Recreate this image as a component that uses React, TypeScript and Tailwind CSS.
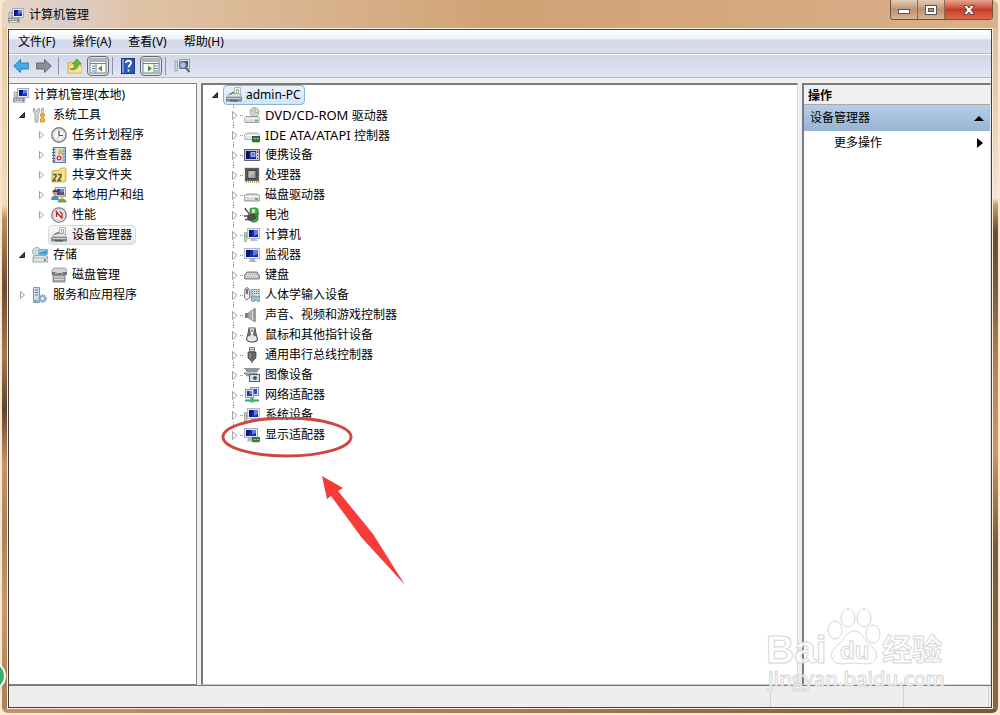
import React, { useState } from 'react';

type IconProps = { children: React.ReactNode };

const Icon = ({ children }: IconProps) => (
  <svg viewBox="0 0 16 16" className="w-4 h-4 shrink-0" aria-hidden="true">
    {children}
  </svg>
);

const Screen = () => (
  <>
    <rect x="4.5" y="1.5" width="11" height="9" fill="#e8e8f0" stroke="#a9abb8" />
    <rect x="6" y="3" width="8" height="6" fill="#1b2fb0" />
    <path d="M6 3h4l-2 6h-2z" fill="#0c1670" />
    <path d="M10 3h4v3l-4 1z" fill="#5b7cec" />
    <path d="M8 11h4l1 2h-6z" fill="#b9bbc6" />
  </>
);

const ConsoleIcon = () => (
  <Icon>
    <Screen />
    <path d="M1 5h3v6h-3z" fill="#c9ccd2" stroke="#8b8f96" strokeWidth=".6" />
    <path d="M0 11h11l1 4.500h-12z" fill="#8d939a" />
    <path d="M1 12.500h2M4 12.500h2M7 12.500h2M2 14.500h7" stroke="#dfe3e6" />
  </Icon>
);

const ComputerIcon = () => (
  <Icon>
    <rect x="3.500" y="1.500" width="12" height="10" fill="#e8e8f0" stroke="#b5b7c3" />
    <rect x="5" y="3" width="9" height="7" fill="#182ba9" />
    <path d="M5 3h4l-2 7h-2z" fill="#0c1670" />
    <path d="M10 3h4v4l-4 2z" fill="#5b7cec" />
    <path d="M7 12h5l2 2h-8z" fill="#b9bbc6" />
    <path d="M.5 5.500h2v9h-2z" fill="#cfe0cf" stroke="#7d9a80" strokeWidth=".7" />
    <path d="M1 9h1.500" stroke="#3bad3e" />
  </Icon>
);

const MonitorIcon = () => (
  <Icon>
    <rect x=".5" y="1.500" width="15" height="10" fill="#e9eaf2" stroke="#b2b5c2" />
    <rect x="2" y="3" width="12" height="7" fill="#182ba9" />
    <path d="M2 3h5l-2 7h-3z" fill="#0b156c" />
    <path d="M9 3h5v4l-5 2z" fill="#587aec" />
    <path d="M6 12h5v1.500l2 1.500h-9l2-1.500z" fill="#adb0bd" />
  </Icon>
);

const DisplayIcon = () => (
  <Icon>
    <rect x=".5" y="1.500" width="13" height="9" fill="#e4e6f0" stroke="#a9adbc" />
    <rect x="2" y="3" width="10" height="6" fill="#182ba9" />
    <path d="M2 3h4l-2 6h-2z" fill="#0b156c" />
    <path d="M8 3h4v3l-4 2z" fill="#587aec" />
    <path d="M4 11h4v2h1v1.500h-6z" fill="#b5b8c4" />
    <rect x="8.500" y="10.500" width="7" height="4" fill="#2e7d50" stroke="#1d5937" strokeWidth=".7" />
    <path d="M10 12.500h1.500M13 12.500h1.500M9 15.500h6" stroke="#d8d7a0" />
  </Icon>
);

const ToolsIcon = () => (
  <Icon>
    <path d="M2 1l1.500 3h2l1-3c2 2 1.500 4-.5 5.500v8c-1 1.200-2 1.200-3 0v-8c-2-1.500-2.500-4-1-5.500z" fill="#d8dadd" stroke="#85898e" strokeWidth=".8" />
    <path d="M9.500 1h2v6h-2z" fill="#c9cbce" stroke="#8e9296" strokeWidth=".5" />
    <path d="M8.500 7h4v2l-1 1v1l1 1v3h-4v-3l1-1v-1l-1-1z" fill="#f2bd2c" stroke="#b07d10" strokeWidth=".7" />
  </Icon>
);

const ClockIcon = () => (
  <Icon>
    <circle cx="8" cy="8" r="7.200" fill="#eef0f3" stroke="#7d8187" strokeWidth="1.400" />
    <circle cx="8" cy="8" r="5.200" fill="#f9fafb" stroke="#c5c9ce" strokeWidth=".7" />
    <path d="M8 3.500v5h4" fill="none" stroke="#55504a" strokeWidth="1.200" />
    <path d="M8 8.500l-1.500 3" stroke="#d8a040" />
  </Icon>
);

const EventIcon = () => (
  <Icon>
    <rect x="2.500" y=".5" width="12" height="15" fill="#b9cde6" stroke="#5e7ba5" />
    <path d="M5 1h6v14h-6z" fill="#dfe3e8" />
    <path d="M9 2l3 5h-5z" fill="#f6c61f" stroke="#b58a10" strokeWidth=".5" />
    <circle cx="8" cy="11" r="2.500" fill="#cf3d3a" />
    <path d="M7 10l2 2M9 10l-2 2" stroke="#fff" strokeWidth=".8" />
    <path d="M11.500 4h2.500M11.500 7h2.500M11.500 10h2.500M11.500 13h2.500" stroke="#6a83ad" />
    <path d="M1 2.500h3M1 5.500h3M1 8.500h3M1 11.500h3M1 14h3" stroke="#4f5f7a" />
  </Icon>
);

const SharedIcon = () => (
  <Icon>
    <path d="M1 4l8-1 1-2h4l1 1v12l-2 1h-12z" fill="#f6dc7b" stroke="#c29d35" strokeWidth=".8" />
    <path d="M10 2.500h4" stroke="#fff6cd" />
    <path d="M2 7.500h3v2l-3 4h3M7 7.500h3v2l-3 4h3" fill="none" stroke="#4c6134" strokeWidth="1.400" />
    <path d="M12.500 5v9" stroke="#fbeeb4" />
  </Icon>
);

const UsersIcon = () => (
  <Icon>
    <rect x="4.500" y=".5" width="10" height="9" fill="#dfe3f1" stroke="#9398b3" />
    <rect x="6" y="2" width="7" height="6" fill="#263fc0" />
    <path d="M9 2h4v3l-4 1z" fill="#6987e6" />
    <circle cx="4" cy="5.500" r="2.500" fill="#cb9168" />
    <path d="M1.500 5c0-3.500 5-3.500 5 0z" fill="#5b3a23" />
    <path d="M0 13c0-6 8-6 8 0z" fill="#4a8fc0" />
    <circle cx="11" cy="8.500" r="2.500" fill="#dfb084" />
    <path d="M8.500 8c0-3.500 5-3.500 5 0z" fill="#7a5328" />
    <path d="M6.500 15.500c0-5.500 9-5.500 9 0z" fill="#69a653" />
  </Icon>
);

const PerfIcon = () => (
  <Icon>
    <circle cx="8" cy="8" r="7.200" fill="#f6f6f6" stroke="#787c80" strokeWidth="1.300" />
    <circle cx="8" cy="8" r="5.200" fill="#fff" stroke="#c4a09f" strokeWidth=".8" />
    <path d="M5.500 10v-5l5.500 6.500M8.500 4.500l2.500 2v4" fill="none" stroke="#b51f1f" strokeWidth="1.400" />
  </Icon>
);

const DeviceIcon = () => (
  <Icon>
    <path d="M8.500 .5h6v8h-6z" fill="#f4f6f3" stroke="#b4b9b6" />
    <path d="M10.500 7v-4.500h2v4.500" fill="none" stroke="#8fb987" />
    <path d="M2 8l2-1.500h9l2 1.500v2h-13z" fill="#dde1e3" stroke="#8f979b" strokeWidth=".7" />
    <path d="M4 7.500l4-2.500" stroke="#666f74" strokeWidth="1.400" />
    <path d="M0 10h16v4.500h-16z" fill="#808a8f" />
    <path d="M1 11.500h14" stroke="#c9cfd2" />
    <path d="M4 13h8v1.500h-8z" fill="#596267" />
  </Icon>
);

const StorageIcon = () => (
  <Icon>
    <circle cx="5" cy="5" r="4.500" fill="#d6dfda" stroke="#8d9c98" strokeWidth=".8" />
    <circle cx="5" cy="5" r="1.500" fill="#fff" stroke="#8d9c98" strokeWidth=".6" />
    <rect x="6" y="2" width="10" height="6" fill="#3a9fd8" stroke="#dcebf3" strokeWidth=".7" />
    <path d="M7 3h8l-8 3z" fill="#85cdf0" />
    <path d="M1 10l2-1.500h11l2 1.500v5h-15z" fill="#e3e5e6" stroke="#888e91" strokeWidth=".8" />
    <path d="M1 11h15" stroke="#9fa5a8" strokeWidth=".8" />
    <path d="M12 13h2" stroke="#3cb54a" strokeWidth="2" />
  </Icon>
);

const DiskMgmtIcon = () => (
  <Icon>
    <path d="M1 3l2-2h11l2 2v4h-15z" fill="#d1d3d4" stroke="#8d9193" strokeWidth=".8" />
    <path d="M1 5h15v3h-15z" fill="#6f7476" />
    <path d="M4 6.500l5-1.500 3 1.500" stroke="#f4f5f5" fill="none" />
    <path d="M2 8h12v7h-12z" fill="#a2a6a8" stroke="#7a7e80" strokeWidth=".8" />
    <path d="M3 10h10M3 12.500h10" stroke="#d6d9da" />
  </Icon>
);

const ServicesIcon = () => (
  <Icon>
    <path d="M1.500 .5h6v15h-6z" fill="#cfdce5" stroke="#7e95a5" />
    <path d="M3 3h3M3 5.500h3M3 8h3" stroke="#648198" />
    <path d="M1 13h5v2.500h-5z" fill="#8ea6b5" />
    <circle cx="10.500" cy="11.500" r="3.200" fill="#cfe0ef" stroke="#6f97ba" strokeWidth="2" strokeDasharray="1.500 .8" />
    <circle cx="10.500" cy="11.500" r="2" fill="#f4f9fd" stroke="#6f97ba" strokeWidth=".8" />
  </Icon>
);

const DiscDriveIcon = () => (
  <Icon>
    <circle cx="10.500" cy="5" r="4.500" fill="#d5dcd5" stroke="#8d9a92" strokeWidth=".8" />
    <path d="M7 3l3.500 2 1-4M10.500 5l4 1" stroke="#8cc47d" fill="none" />
    <circle cx="10.500" cy="5" r="1.300" fill="#fff" stroke="#7c8880" strokeWidth=".6" />
    <path d="M0 11.500l2-2h12l2 2v3l-1 1h-14l-1-1z" fill="#dadcdd" stroke="#858a8d" strokeWidth=".8" />
    <path d="M1 11.500h14" stroke="#f8f8f8" />
    <path d="M11 13.500h3" stroke="#47b44d" strokeWidth="1.400" />
  </Icon>
);

const IdeIcon = () => (
  <Icon>
    <path d="M0 8l3-2h10l3 2v4c-5 1-11 1-16 0z" fill="#e3e4e5" stroke="#9ba0a2" strokeWidth=".8" />
    <path d="M1 8.500h14" stroke="#fff" />
    <rect x="8.500" y="9.500" width="7" height="5" fill="#2f7b51" stroke="#174c2e" strokeWidth=".8" />
    <path d="M10 11.500h1.500M13 11.500h1.500M9 15.500h6" stroke="#d2d4a3" />
  </Icon>
);

const PortableIcon = () => (
  <Icon>
    <rect x=".5" y="2.500" width="15" height="11" fill="#c4c5cf" stroke="#5d6076" />
    <rect x="2" y="4" width="10" height="8" fill="#1326a0" />
    <path d="M2 4h3v8h-3z" fill="#070e4a" />
    <path d="M7 5.500h4v4h-4z" fill="#5679e6" stroke="#c8d4f5" strokeWidth=".8" />
    <path d="M13.500 4v2M13.500 8v1M13.500 11v1" stroke="#3f445c" />
  </Icon>
);

const CpuIcon = () => (
  <Icon>
    <rect x="1.500" y="1.500" width="13" height="13.500" fill="none" stroke="#b3a46f" strokeWidth="2" strokeDasharray="1 1" />
    <rect x="1" y="1" width="14" height="13" fill="#5c5d5e" />
    <rect x="4" y="3.500" width="8" height="8" fill="#a5a6a7" stroke="#3c3c3d" />
    <path d="M4.500 4h7l-7 7z" fill="#b9babb" />
  </Icon>
);

const DiskIcon = () => (
  <Icon>
    <path d="M0 9l3-2h10l3 2v4l-1 1h-14l-1-1z" fill="#d8d9da" stroke="#83878a" strokeWidth=".9" />
    <path d="M1 9.500h14" stroke="#fbfbfb" />
    <path d="M11 12h3" stroke="#3bb143" strokeWidth="1.500" />
  </Icon>
);

const BatteryIcon = () => (
  <Icon>
    <path d="M6 2l2-1h4l2 1v11l-2 2h-4l-2-2z" fill="#45b04a" stroke="#267030" strokeWidth=".8" />
    <path d="M8 2h3v5h-3z" fill="#b5ecae" />
    <path d="M1 1c1 3 3 3 4 6M0 9h5M1 12.500h5" fill="none" stroke="#4e4e44" strokeWidth="1.400" />
    <path d="M4 8l6-1.500c3 0 3 5 0 6l-4 1c-2 0-3-3-2-5.500z" fill="#4f5247" stroke="#2f322a" strokeWidth=".6" />
    <path d="M11 9l4-3" stroke="#4c7a45" strokeWidth="1.600" />
  </Icon>
);

const KeyboardIcon = () => (
  <Icon>
    <path d="M3 5h10l3 4v2l-1 1h-14l-1-1v-2z" fill="#b4b7bd" stroke="#73777d" strokeWidth=".9" />
    <path d="M3 7h10M2.500 8.500h11M2 10h12" stroke="#eceef1" strokeDasharray="1.200 .8" />
  </Icon>
);

const HidIcon = () => (
  <Icon>
    <path d="M1 2l2-1.500 2 1.500 1 8-2 2.500h-2l-1.500-2z" fill="#ececed" stroke="#66696d" strokeWidth=".9" />
    <path d="M3 2v5" stroke="#333" strokeWidth="1.300" />
    <path d="M7 2.500h9v8h-9z" fill="#d5dadf" stroke="#868b90" strokeWidth=".8" />
    <path d="M8 4.500h7M8 6.500h7" stroke="#67727c" strokeDasharray="1 1" />
    <path d="M8 9l3 0 1 1 4-1v5l-2 1-2-2-3 2-2-2z" fill="#9cc1d1" stroke="#5f8798" strokeWidth=".7" />
  </Icon>
);

const SoundIcon = () => (
  <Icon>
    <path d="M1 6h3v5h-3z" fill="#797f85" />
    <path d="M4 6l7-5v14l-7-4z" fill="#a4aaaf" stroke="#8b9197" strokeWidth=".7" />
    <path d="M8.500 4v9" stroke="#d6dadd" />
    <path d="M11 1.500v13" stroke="#7d8287" strokeWidth="1.200" />
  </Icon>
);

const MouseIcon = () => (
  <Icon>
    <path d="M5 1h6l1 6 1.500 5c0 4-11 4-11 0l1.500-5z" fill="#e7e7e8" stroke="#4d4d4f" strokeWidth="1.100" />
    <path d="M5.500 1.500l-2 7 2 1 2.500-3 2.500 3 2-1-2-7z" fill="#6a6b6d" />
    <path d="M6 1.500h4l-1 6h-2z" fill="#fafafa" />
    <path d="M8 2.500v2.500" stroke="#333" />
  </Icon>
);

const UsbIcon = () => (
  <Icon>
    <path d="M5.500 .5h5v4h-5z" fill="#e2e3e4" stroke="#75797c" />
    <path d="M7 2v1M9 2v1" stroke="#46494b" />
    <path d="M4 5h8v6l-2.500 2.500h-3l-2.500-2.500z" fill="#66696c" stroke="#434648" strokeWidth=".7" />
    <path d="M6 6v5" stroke="#a2a5a8" />
    <path d="M8 13v3" stroke="#55585b" strokeWidth="1.400" />
  </Icon>
);

const ImagingIcon = () => (
  <Icon>
    <path d="M0 1h16l-3 4h-10z" fill="#6e797c" />
    <path d="M1 2h14M3 4h10" stroke="#bdc7c9" strokeWidth=".8" />
    <path d="M0 6h13v3h-10z" fill="#a4afb1" stroke="#697679" strokeWidth=".7" />
    <rect x="5.500" y="7.500" width="10" height="7" fill="#d3dadd" stroke="#566469" />
    <circle cx="11" cy="11" r="2.400" fill="#315166" stroke="#f6f7f7" strokeWidth=".8" />
  </Icon>
);

const NetworkIcon = () => (
  <Icon>
    <rect x="6.500" y=".5" width="8" height="8" fill="#dde2f1" stroke="#8d94b2" />
    <rect x="8" y="2" width="5" height="5" fill="#274bc8" />
    <rect x="1.500" y="2.500" width="8" height="8" fill="#dde2f1" stroke="#8d94b2" />
    <rect x="3" y="4" width="5" height="5" fill="#1933b0" />
    <path d="M5.500 4h2.500v3l-2.500 1z" fill="#6588ed" />
    <path d="M8 11v2M1 13.500h14" stroke="#30a56c" strokeWidth="2" />
    <path d="M6 11.500h4v4h-4z" fill="#45b67f" />
  </Icon>
);

const ArrowIcon = ({ flip, fill, stroke }: { flip?: boolean; fill: string; stroke: string }) => (
  <Icon>
    <path
      d="M.7 8l6.800-6.500v3.500h7.800v6h-7.800v3.500z"
      fill={fill}
      stroke={stroke}
      strokeLinejoin="round"
      transform={flip ? 'matrix(-1 0 0 1 16 0)' : undefined}
    />
  </Icon>
);

const FolderUpIcon = () => (
  <Icon>
    <path d="M1 5l4-1 1 1h8v10h-13z" fill="#f4d77a" stroke="#c09a45" strokeWidth=".8" />
    <path d="M1.500 14.500l1.500-6h11v6z" fill="#f9e49a" />
    <path d="M3 11c3.500 0 5-2 5-5h-2.500l4.500-5 4 5h-2.500c0 4-4 7-8.500 5z" fill="#62bd3c" stroke="#3c8623" strokeWidth=".7" />
  </Icon>
);

const PaneIcon = ({ side }: { side: 'left' | 'right' }) => (
  <svg viewBox="0 0 18 16" className="w-[18px] h-4" aria-hidden="true">
    <rect x="1" y="1" width="16" height="14" fill="#fbfbf8" stroke="#7b8088" />
    <path d="M2 3h14" stroke="#a9b2c1" strokeWidth="2" />
    <path d="M1 5.500h16" stroke="#7b8088" />
    {side === 'left' ? (
      <>
        <path d="M7 6v9" stroke="#7b8088" />
        <path d="M3 8h3M3 10.500h3M3 13h3" stroke="#4d83ad" />
        <path d="M13 7.500v6l-4-3z" fill="#37a028" />
      </>
    ) : (
      <>
        <path d="M12 6v9" stroke="#7b8088" />
        <path d="M13 8h3M13 10.500h3M13 13h3" stroke="#4d83ad" />
        <path d="M6 7.500v6l4-3z" fill="#37a028" />
      </>
    )}
  </svg>
);

const HelpIcon = () => (
  <svg viewBox="0 0 14 16" className="w-[14px] h-4" aria-hidden="true">
    <rect x=".5" y=".5" width="13" height="15" fill="#2d57b4" stroke="#1d3b82" />
    <path d="M1 1h2v14h-2z" fill="#7596dc" />
    <path d="M5 5c0-3 5-3 5 0 0 2-2.500 2-2.500 4.500M7.500 11.500v2" fill="none" stroke="#fff" strokeWidth="1.800" />
  </svg>
);

const ScanIcon = () => (
  <Icon>
    <path d="M1 3h2.500v10h-2.500z" fill="#d2d5da" stroke="#8d939b" strokeWidth=".7" />
    <rect x="5.500" y="1.500" width="10" height="9" fill="#dde1ee" stroke="#959cae" />
    <rect x="7" y="3" width="7" height="6" fill="#3352b3" />
    <circle cx="9" cy="7" r="3.300" fill="#c7dcf2" fillOpacity=".8" stroke="#5a6577" strokeWidth="1.200" />
    <path d="M11.500 9.500l4 4.500" stroke="#5a6577" strokeWidth="2" />
  </Icon>
);

type Node = { label: string; latin?: string; icon: React.FC; children?: Node[]; open?: boolean; branch?: boolean; selected?: boolean };

const consoleTree: Node[] = [
  {
    label: '系统工具',
    icon: ToolsIcon,
    branch: true,
    open: true,
    children: [
      { label: '任务计划程序', icon: ClockIcon, branch: true },
      { label: '事件查看器', icon: EventIcon, branch: true },
      { label: '共享文件夹', icon: SharedIcon, branch: true },
      { label: '本地用户和组', icon: UsersIcon, branch: true },
      { label: '性能', icon: PerfIcon, branch: true },
      { label: '设备管理器', icon: DeviceIcon, selected: true },
    ],
  },
  {
    label: '存储',
    icon: StorageIcon,
    branch: true,
    open: true,
    children: [{ label: '磁盘管理', icon: DiskMgmtIcon }],
  },
  { label: '服务和应用程序', icon: ServicesIcon, branch: true },
];

const devices: Node[] = [
  { latin: 'DVD/CD-ROM ', label: '驱动器', icon: DiscDriveIcon },
  { latin: 'IDE ATA/ATAPI ', label: '控制器', icon: IdeIcon },
  { label: '便携设备', icon: PortableIcon },
  { label: '处理器', icon: CpuIcon },
  { label: '磁盘驱动器', icon: DiskIcon },
  { label: '电池', icon: BatteryIcon },
  { label: '计算机', icon: ComputerIcon },
  { label: '监视器', icon: MonitorIcon },
  { label: '键盘', icon: KeyboardIcon },
  { label: '人体学输入设备', icon: HidIcon },
  { label: '声音、视频和游戏控制器', icon: SoundIcon },
  { label: '鼠标和其他指针设备', icon: MouseIcon },
  { label: '通用串行总线控制器', icon: UsbIcon },
  { label: '图像设备', icon: ImagingIcon },
  { label: '网络适配器', icon: NetworkIcon },
  { label: '系统设备', icon: ComputerIcon },
  { label: '显示适配器', icon: DisplayIcon },
];

const Triangle = ({ open }: { open: boolean }) => (
  <svg viewBox="0 0 10 10" className="w-[10px] h-[10px]" aria-hidden="true">
    {open ? <path d="M7.500 2.500v5h-5z" fill="#444" stroke="#222" /> : <path d="M3.500 1.500v7l4-3.500z" fill="#fff" stroke="#a0a0a0" />}
  </svg>
);

const TreeNode = ({ node }: { node: Node }) => {
  const [open, setOpen] = useState(!!node.open);
  const NodeIcon = node.icon;

  return (
    <li>
      <div className="flex items-center h-5">
        {node.branch ? (
          <button type="button" aria-label={node.label} aria-expanded={open} onClick={() => setOpen(!open)} className="w-[10px] mr-[2px]">
            <Triangle open={open} />
          </button>
        ) : (
          <span className="w-[10px] mr-[2px]" />
        )}
        <span
          className={
            node.selected
              ? 'flex items-center gap-[5px] h-5 pl-[2px] pr-[3px] border border-[#d9d9d9] rounded-sm bg-gradient-to-b from-[#fafafa] to-[#e6e6e6]'
              : 'flex items-center gap-[5px] h-5 px-[3px]'
          }
        >
          <NodeIcon />
          {node.label}
        </span>
      </div>
      {open && node.children && (
        <ul className="pl-[19px]">
          {node.children.map((child) => (
            <TreeNode key={child.label} node={child} />
          ))}
        </ul>
      )}
    </li>
  );
};

// red ellipse and arrow drawn over the highlighted device
const Callout = () => (
  <svg viewBox="0 0 190 176" className="absolute -left-2 -top-2 w-[190px] h-[176px] pointer-events-none" aria-hidden="true">
    <ellipse cx="66" cy="20" rx="64" ry="19" fill="none" stroke="#cf4642" strokeWidth="3" />
    <path d="M101 59L122 71L117 74L152 117L184 168L141 121L110 79L106 82Z" fill="#f83a38" />
  </svg>
);

const DeviceRow = ({ node, last }: { node: Node; last?: boolean }) => {
  const NodeIcon = node.icon;
  return (
    <li className="relative flex items-center h-5">
      <button type="button" aria-label={node.label} className="w-[14px] h-5 shrink-0">
        <svg viewBox="0 0 14 20" className="w-[14px] h-5" aria-hidden="true">
          <path d={last ? 'M4.500 0v3' : 'M4.500 0v3M4.500 17v3'} stroke="#8a8a8a" strokeDasharray="1 1" />
          <path d="M11 10.500h3" stroke="#8a8a8a" strokeDasharray="1 1" />
          <path d="M3.500 6.500v8l4.500-4z" fill="#fff" stroke="#a0a0a0" />
        </svg>
      </button>
      <span className="flex items-center gap-[5px] pl-px whitespace-nowrap">
        <NodeIcon />
        <span className="leading-5">
          {node.latin && <span className="text-[13px] leading-5">{node.latin}</span>}
          {node.label}
        </span>
      </span>
      {last && <Callout />}
    </li>
  );
};

const Watermark = () => (
  <svg viewBox="0 0 184 88" className="absolute right-[50px] bottom-[21px] w-[184px] h-[88px] pointer-events-none" aria-label="Baidu 经验">
    <g fill="#fff" fillOpacity=".85" stroke="#d6d6d6" strokeWidth="1">
      <text x="0" y="57" fontSize="39" fontWeight="700" fontFamily="Liberation Sans, sans-serif">Bai</text>
      <ellipse cx="69" cy="24" rx="7" ry="9" />
      <ellipse cx="82" cy="12" rx="7" ry="9" />
      <ellipse cx="98" cy="12" rx="7" ry="9" />
      <ellipse cx="107" cy="28" rx="7" ry="9" />
      <path d="M88 25c8 0 9 8 15 13 5 4 9 8 7 14-3 9-14 5-22 5s-19 4-22-5c-2-6 2-10 7-14 6-5 7-13 15-13z" />
      <text x="74" y="53" fontSize="24" fontWeight="700" fontFamily="Liberation Sans, sans-serif">du</text>
      <text x="116" y="54" fontSize="30" fontWeight="700" fontFamily="Noto Sans CJK SC, sans-serif">经验</text>
      <text x="2" y="80" fontSize="20" fontWeight="600" fontFamily="Open Sans, sans-serif">jingyan.baidu.com</text>
    </g>
  </svg>
);

const menus = ['文件(F)', '操作(A)', '查看(V)', '帮助(H)'];

const Separator = () => <span className="w-px h-[18px] ml-[3px] mr-2 bg-[#8d93a3]" />;

export default function App() {
  const [actionsOpen, setActionsOpen] = useState(true);

  return (
    <main className="relative min-h-screen flex flex-col overflow-hidden bg-[#fbe6cf] px-[2px] pb-[2px] text-xs text-black font-['Noto_Sans','Noto_Sans_CJK_SC',sans-serif]">
      <div className="flex-1 flex flex-col rounded-md overflow-hidden">
        <header className="flex items-start justify-between h-7 pr-[5px] bg-gradient-to-r from-[#e5cfb8] via-[#d0a274] to-[#dab08a]">
          <div className="flex items-center gap-[5px] h-7 pt-[2px] pl-[6px] pr-10 bg-gradient-to-r from-[#e9d6c2] via-[#d9cdc9] to-transparent">
            <ConsoleIcon />
            <h1>计算机管理</h1>
          </div>
          <div className="flex h-5 rounded-b border border-t-0 border-[#6e5240] overflow-hidden">
            <button type="button" aria-label="最小化" className="w-[27px] flex items-center justify-center border-r border-[#8b6b52] bg-gradient-to-b from-[#e5cdb9] via-[#bd9270] to-[#d8b494]">
              <svg viewBox="0 0 12 8" className="w-3 h-2" aria-hidden="true">
                <rect x=".5" y="3.500" width="11" height="4" fill="#fff" stroke="#555" />
              </svg>
            </button>
            <button type="button" aria-label="最大化" className="w-[27px] flex items-center justify-center border-r border-[#8b6b52] bg-gradient-to-b from-[#e5cdb9] via-[#bd9270] to-[#d8b494]">
              <svg viewBox="0 0 12 10" className="w-3 h-[10px]" aria-hidden="true">
                <rect x=".5" y=".5" width="11" height="9" fill="#fff" stroke="#555" />
                <rect x="3.500" y="3.500" width="5" height="3" fill="#c09676" stroke="#555" />
              </svg>
            </button>
            <button type="button" aria-label="关闭" className="w-[47px] flex items-center justify-center bg-gradient-to-b from-[#e5a392] via-[#c43c27] to-[#d9694c]">
              <svg viewBox="0 0 12 10" className="w-3 h-[10px]" aria-hidden="true">
                <path d="M.5 .5h3.500l2 2.500 2-2.500h3.500l-3.500 4.500 3.500 4.500h-3.500l-2-2.500-2 2.500h-3.500l3.500-4.500z" fill="#fff" stroke="#6b4644" />
              </svg>
            </button>
          </div>
        </header>

        <div className="flex-1 flex">
          <div className="w-[5px] bg-linear-[180deg,#e9cba8_0%,#f3dcbc_26%,#b8905f_28%,#6b4a30_38%,#a07a52_48%,#5f442f_56%,#c59467_64%,#a9825f_74%,#c79a6a_85%,#a87f58_100%]" />
          <div className="flex-1 min-w-0 flex flex-col border border-[#fbefe0]">
            <div className="flex-1 flex flex-col border border-[#4a4038] bg-[#f0f0f0]">
              <nav className="flex items-center gap-px h-6 pl-px bg-linear-[180deg,#ffffff_0%,#eef1f9_40%,#d4daec_42%,#d7ddef_100%] border-b border-[#b4b9c8]">
                {menus.map((item) => (
                  <button key={item} type="button" className="px-2 whitespace-nowrap">
                    {item}
                  </button>
                ))}
              </nav>
              <div className="flex items-center h-6 pl-1 border-t border-t-white border-b border-b-[#b3bccb] bg-gradient-to-b from-[#d0d7ea] to-[#e0e5f5]">
                <div className="flex items-center gap-[7px] pr-[3px]">
                  <button type="button" aria-label="后退">
                    <ArrowIcon fill="#42aee8" stroke="#2b7fb5" />
                  </button>
                  <button type="button" aria-label="前进">
                    <ArrowIcon flip fill="#8d9094" stroke="#66696d" />
                  </button>
                </div>
                <Separator />
                <div className="flex items-center gap-1">
                  <button type="button" aria-label="上一级">
                    <FolderUpIcon />
                  </button>
                  <button type="button" aria-label="显示/隐藏控制台树" className="px-px py-px border border-[#646a78] rounded bg-[#dfe3ec]">
                    <PaneIcon side="left" />
                  </button>
                </div>
                <Separator />
                <div className="flex items-center gap-[5px]">
                  <button type="button" aria-label="帮助">
                    <HelpIcon />
                  </button>
                  <button type="button" aria-label="显示/隐藏操作窗格" className="px-px py-px border border-[#646a78] rounded bg-[#dfe3ec]">
                    <PaneIcon side="right" />
                  </button>
                </div>
                <Separator />
                <button type="button" aria-label="扫描检测硬件改动">
                  <ScanIcon />
                </button>
              </div>

              <div className="flex-1 flex gap-1 pt-[5px]">
                <aside className="w-[188px] shrink-0 pt-px border border-[#808488] border-l-0 bg-white">
                  <div className="flex items-center gap-[5px] h-5 pl-1">
                    <ConsoleIcon />
                    计算机管理(本地)
                  </div>
                  <ul className="pl-2">
                    {consoleTree.map((node) => (
                      <TreeNode key={node.label} node={node} />
                    ))}
                  </ul>
                </aside>

                <section className="flex-1 min-w-0 border-2 border-r border-b border-[#787c80] border-r-[#d8d8d8] border-b-[#c8c8c8] bg-white">
                  <div className="flex items-center h-5 pl-[7px]">
                    <button type="button" aria-label="admin-PC" aria-expanded="true" className="w-[10px] mr-[3px]">
                      <Triangle open />
                    </button>
                    <span className="flex items-center gap-1 h-5 pl-[2px] pr-[3px] border border-[#8db4d9] rounded-sm bg-gradient-to-b from-[#eaf3fc] to-[#cfe3f8]">
                      <DeviceIcon />
                      admin-PC
                    </span>
                  </div>
                  <ul className="pl-[26px]">
                    {devices.map((node, index) => (
                      <DeviceRow key={node.latin ?? index} node={node} last={index === devices.length - 1} />
                    ))}
                  </ul>
                </section>

                <aside className="w-[189px] shrink-0 border-2 border-r border-b border-[#787c80] border-r-[#e3e3e3] border-b-[#d8d8d8] bg-white">
                  <h2 className="h-5 pl-1 leading-[22px] font-bold bg-[#f0f0f0] border-b border-[#a8a8a8]">操作</h2>
                  <button
                    type="button"
                    aria-expanded={actionsOpen}
                    onClick={() => setActionsOpen(!actionsOpen)}
                    className="flex items-center justify-between w-full h-[26px] px-[6px] bg-gradient-to-b from-[#b5cde7] to-[#98b4d3]"
                  >
                    设备管理器
                    <svg viewBox="0 0 10 6" className="w-[10px] h-[6px]" aria-hidden="true">
                      <path d="M5 1l5 5h-10z" />
                    </svg>
                  </button>
                  {actionsOpen && (
                    <button type="button" className="flex items-center justify-between w-full h-6 pl-[30px] pr-[7px]">
                      更多操作
                      <svg viewBox="0 0 6 10" className="w-[6px] h-[10px]" aria-hidden="true">
                        <path d="M0 0l6 5-6 5z" />
                      </svg>
                    </button>
                  )}
                </aside>
              </div>

              <footer className="flex justify-end h-[22px] pr-[2px] border-t border-[#77797b] bg-[#f0eded]">
                <span className="w-[133px] border-l border-[#d4d0d0]" />
                <span className="w-[86px] border-x border-[#d4d0d0]" />
              </footer>
            </div>
          </div>
          <div className="w-[5px] bg-linear-[180deg,#e0bc98_0%,#f2e2d0_24%,#f5e4d0_25%,#c59a68_26%,#6a4c33_30%,#7c5a3e_38%,#b58654_50%,#c99a66_62%,#7d5a36_76%,#8b6640_100%]" />
        </div>
        <div className="h-1 bg-gradient-to-r from-[#c09468] via-[#a87c54] to-[#7a5639]" />
      </div>

      <span className="absolute -left-6 bottom-6 w-[30px] h-[30px] rounded-full border-2 border-white bg-[#3fae62] shadow" />
      <Watermark />
    </main>
  );
}
